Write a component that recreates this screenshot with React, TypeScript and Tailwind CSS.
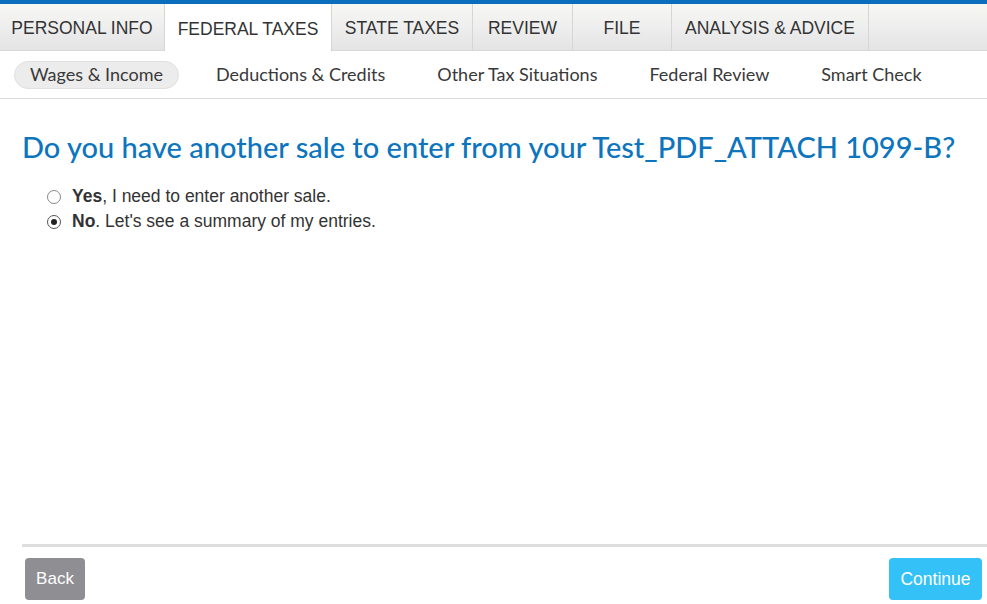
import React from "react";

const tabs = [
  { label: "PERSONAL INFO", w: 165 },
  { label: "FEDERAL TAXES", w: 167, active: true },
  { label: "STATE TAXES", w: 141 },
  { label: "REVIEW", w: 100 },
  { label: "FILE", w: 99 },
  { label: "ANALYSIS & ADVICE", w: 197 },
];

const sub = ["Wages & Income", "Deductions & Credits", "Other Tax Situations", "Federal Review", "Smart Check"];

export default function App() {
  return (
    <div className="w-[987px] h-[604px] bg-white flex flex-col overflow-hidden" style={{ fontFamily: "'Liberation Sans', Arial, sans-serif" }}>
      <div className="h-[4px] bg-[#0a6ebd] shrink-0" />
      <div className="h-[47px] flex shrink-0 bg-gradient-to-b from-[#f7f7f2] via-[#eeeeee] to-[#e4e4e4] border-b border-[#d8d8d8]">
        {tabs.map((t) => (
          <div
            key={t.label}
            style={{ width: t.w }}
            className={`flex items-center justify-center pt-[3px] text-[17.5px] text-[#333] border-r border-[#d6d6d6] ${t.active ? "bg-white -mb-px" : "bg-gradient-to-b from-[#f7f7f2] via-[#eeeeee] to-[#e4e4e4]"}`}
          >
            {t.label}
          </div>
        ))}
        <div className="flex-1" />
      </div>
      <div className="h-[48px] shrink-0 flex items-center border-b border-[#dcdcdc] pl-[14px] text-[18px] text-[#393939]" style={{ fontFamily: "Lato, 'Open Sans', sans-serif" }}>
        {sub.map((s, i) => (
          <div
            key={s}
            className={`h-[28px] flex items-center px-[15px] rounded-full mr-[22px] ${i === 0 ? "bg-[#ececec] border border-[#e0e0e0]" : ""}`}
          >
            {s}
          </div>
        ))}
      </div>
      <div className="flex-1 flex flex-col pl-[22px]">
        <h1 className="mt-[30px] text-[29px] leading-[36px] text-[#0d75bd]" style={{ fontFamily: "Lato, 'Open Sans', sans-serif", fontWeight: 500 }}>
          Do you have another sale to enter from your Test_PDF_ATTACH 1099-B?
        </h1>
        <div className="mt-[19px] pl-[25px] flex flex-col text-[17.5px] text-[#333]">
          <label className="flex items-center h-[25px]">
            <span className="w-[14px] h-[14px] rounded-full border border-[#888] bg-white mr-[11px]" />
            <span><b>Yes</b>, I need to enter another sale.</span>
          </label>
          <label className="flex items-center h-[25px]">
            <span className="w-[14px] h-[14px] rounded-full border border-[#555] bg-white mr-[11px] flex items-center justify-center">
              <span className="w-[6px] h-[6px] rounded-full bg-[#222]" />
            </span>
            <span><b>No</b>. Let's see a summary of my entries.</span>
          </label>
        </div>
        <div className="flex-1" />
        <div className="h-[3px] bg-[#dedede]" />
        <div className="flex justify-between items-center pt-[11px] pb-[4px] pr-[5px]">
          <button className="ml-[3px] w-[60px] h-[42px] rounded-[4px] bg-[#8e8e93] text-white text-[17px]">Back</button>
          <button className="w-[93px] h-[42px] rounded-[4px] bg-[#33c1f7] text-white text-[17.5px]">Continue</button>
        </div>
      </div>
    </div>
  );
}
